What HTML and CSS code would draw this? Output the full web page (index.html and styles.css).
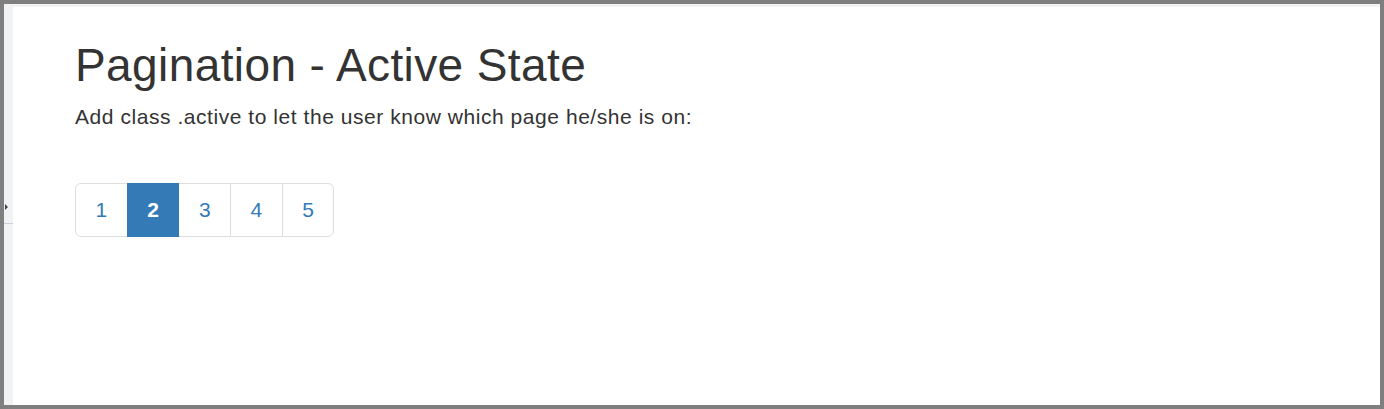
FILE: index.html
```html
<!DOCTYPE html>
<html lang="en">
<head>
<meta charset="utf-8">
<title>Pagination - Active State</title>
<link rel="stylesheet" href="styles.css">
</head>
<body>
<div class="frame">
  <div class="side-strip">
    <span class="side-mark"></span>
    <span class="side-line"></span>
  </div>
  <div class="main">
    <div class="container">
      <h2 class="title">Pagination - Active State</h2>
      <p class="lead">Add class .active to let the user know which page he/she is on:</p>
      <ul class="pagination">
        <li><a href="#">1</a></li>
        <li class="active"><a href="#">2</a></li>
        <li><a href="#">3</a></li>
        <li><a href="#">4</a></li>
        <li><a href="#">5</a></li>
      </ul>
    </div>
  </div>
</div>
</body>
</html>
```

FILE: styles.css
```css
* { box-sizing: border-box; }

html, body {
  margin: 0;
  padding: 0;
  background: #7f7f7f;
}

.frame {
  width: 1384px;
  height: 409px;
  border: 4px solid #7f7f7f;
  display: flex;
  background: #ffffff;
  font-family: "Liberation Sans", Arial, sans-serif;
  color: #333333;
}

.side-strip {
  width: 9px;
  flex: none;
  background: #f1f2f4;
  display: flex;
  flex-direction: column;
  padding-top: 200px;
}

.side-mark {
  width: 0;
  height: 0;
  margin-left: 1px;
  border-left: 3px solid #444;
  border-top: 3px solid transparent;
  border-bottom: 3px solid transparent;
}

.side-line {
  margin-top: 13px;
  height: 1px;
  background: #c9d2dc;
}

.main {
  flex: 1;
  border-top: 3px solid #f3f3f3;
}

.container {
  padding-left: 62px;
}

.title {
  margin: 34px 0 11px;
  font-size: 46px;
  line-height: 49.5px;
  font-weight: 500;
  letter-spacing: 0.4px;
  color: #333333;
}

.lead {
  margin: 0;
  font-size: 21px;
  line-height: 30px;
  letter-spacing: 0.55px;
  color: #333333;
}

.pagination {
  display: inline-flex;
  list-style: none;
  margin: 51px 0 0;
  padding: 0;
}

.pagination li + li {
  margin-left: -1px;
}

.pagination a {
  display: block;
  padding: 11px 19.5px;
  font-size: 21px;
  line-height: 30px;
  color: #337ab7;
  text-decoration: none;
  background: #ffffff;
  border: 1px solid #dddddd;
}

.pagination li:first-child a {
  border-radius: 6px 0 0 6px;
}

.pagination li:last-child a {
  border-radius: 0 6px 6px 0;
}

.pagination .active a {
  position: relative;
  color: #ffffff;
  font-weight: 600;
  background: #337ab7;
  border-color: #337ab7;
}
```
